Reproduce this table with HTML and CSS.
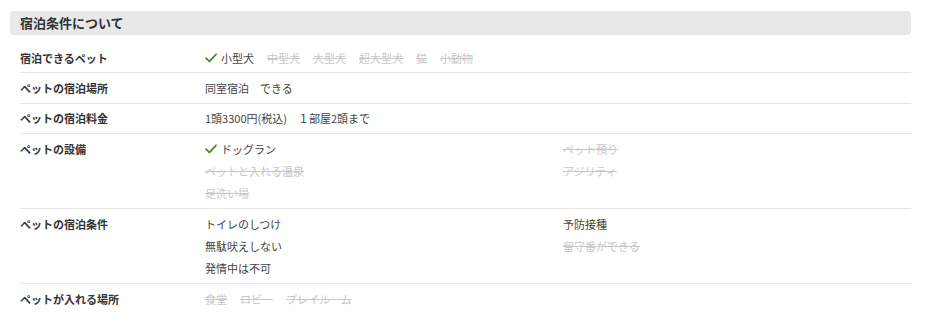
FILE: index.html
```html
<!DOCTYPE html>
<html lang="ja">
<head>
<meta charset="utf-8">
<link rel="stylesheet" href="styles.css">
</head>
<body>
<section class="conditions">
  <h2 class="heading">宿泊条件について</h2>
  <div class="rows">
    <div class="row">
      <div class="label">宿泊できるペット</div>
      <div class="value inline">
        <span class="item on"><svg class="check" viewBox="0 0 12 10" width="12" height="10"><path d="M1 5.2 L4.4 8.4 L11 1.4"/></svg>小型犬</span>
        <span class="item off">中型犬</span>
        <span class="item off">大型犬</span>
        <span class="item off">超大型犬</span>
        <span class="item off">猫</span>
        <span class="item off">小動物</span>
      </div>
    </div>
    <div class="row">
      <div class="label">ペットの宿泊場所</div>
      <div class="value"><span class="item">同室宿泊　できる</span></div>
    </div>
    <div class="row">
      <div class="label">ペットの宿泊料金</div>
      <div class="value"><span class="item">1頭3300円(税込)　１部屋2頭まで</span></div>
    </div>
    <div class="row">
      <div class="label">ペットの設備</div>
      <div class="value grid">
        <span class="item on"><svg class="check" viewBox="0 0 12 10" width="12" height="10"><path d="M1 5.2 L4.4 8.4 L11 1.4"/></svg>ドッグラン</span>
        <span class="item off">ペット預り</span>
        <span class="item off">ペットと入れる温泉</span>
        <span class="item off">アジリティ</span>
        <span class="item off">足洗い場</span>
      </div>
    </div>
    <div class="row">
      <div class="label">ペットの宿泊条件</div>
      <div class="value grid">
        <span class="item">トイレのしつけ</span>
        <span class="item">予防接種</span>
        <span class="item">無駄吠えしない</span>
        <span class="item off">留守番ができる</span>
        <span class="item">発情中は不可</span>
      </div>
    </div>
    <div class="row last">
      <div class="label">ペットが入れる場所</div>
      <div class="value inline">
        <span class="item off">食堂</span>
        <span class="item off">ロビー</span>
        <span class="item off">プレイルーム</span>
      </div>
    </div>
  </div>
</section>
</body>
</html>
```

FILE: styles.css
```css
html, body {
  margin: 0;
  padding: 0;
  background: #fff;
}
body {
  font-family: "Noto Sans CJK JP", "Noto Sans", sans-serif;
  color: #333;
}
.conditions {
  padding: 11px 19px 0 10px;
}
.heading {
  margin: 0;
  height: 24px;
  line-height: 24px;
  padding: 0 10px;
  background: #e8e8e8;
  border-radius: 4px;
  font-size: 13px;
  font-weight: bold;
  color: #333;
}
.rows {
  margin: 8px 0 0 10px;
}
.row {
  display: grid;
  grid-template-columns: 185px 1fr;
  padding: 3.6px 0;
  border-bottom: 1px solid #e6e6e6;
}
.row.last {
  border-bottom: none;
}
.label {
  font-size: 11px;
  font-weight: bold;
  line-height: 22.25px;
  color: #333;
}
.value {
  font-size: 11px;
  line-height: 22.25px;
  color: #444;
}
.value.inline {
  display: flex;
  gap: 13px;
}
.value.grid {
  display: grid;
  grid-template-columns: 358px 1fr;
}
.item {
  display: inline-flex;
  align-items: center;
  white-space: nowrap;
}
.item.off {
  color: #c8c8c8;
  text-decoration: line-through;
}
.check {
  margin-right: 4px;
  fill: none;
  stroke: #4a8a1c;
  stroke-width: 1.8;
  stroke-linecap: round;
  stroke-linejoin: round;
}
```
